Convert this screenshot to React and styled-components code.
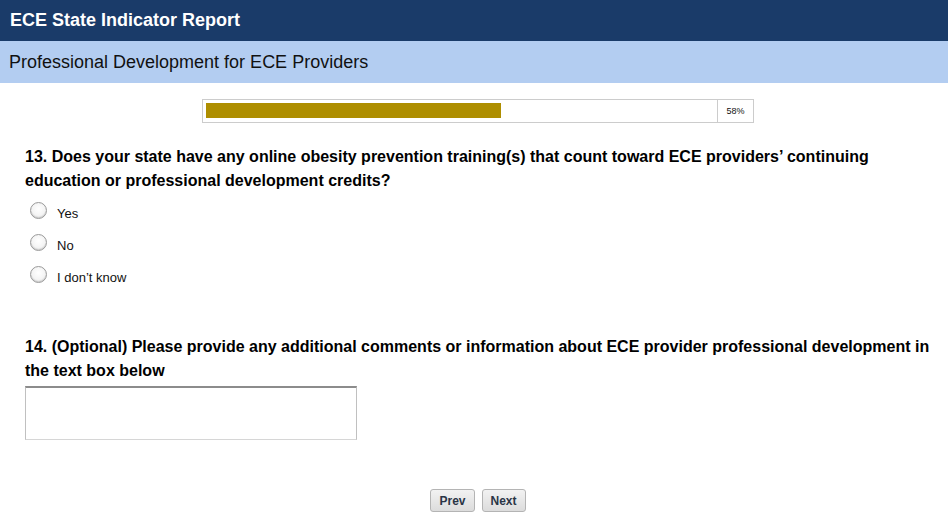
import styled, { createGlobalStyle } from "styled-components";

const GlobalStyle = createGlobalStyle`
  html, body {
    margin: 0;
    padding: 0;
    background: #ffffff;
    font-family: "Liberation Sans", Arial, sans-serif;
    color: #000000;
  }
`;

const TopBar = styled.header`
  height: 41px;
  background: #1a3b69;
  color: #ffffff;
  display: flex;
  align-items: center;
  padding: 0 10px;
  font-size: 18px;
  font-weight: 700;
`;

const SectionBar = styled.div`
  height: 42px;
  background: #b3cdf1;
  display: flex;
  align-items: center;
  padding: 0 9px;
  font-size: 18px;
  color: #111111;
`;

const Content = styled.main`
  padding: 16px 10px 0 25px;
`;

const Progress = styled.div`
  margin-left: 177px;
  width: 552px;
  height: 24px;
  box-sizing: border-box;
  border: 1px solid #cccccc;
  display: flex;
`;

const Track = styled.div`
  flex: 1;
  padding: 3px;
`;

const Fill = styled.div`
  height: 15px;
  background: #ae8e00;
`;

const Percent = styled.div`
  width: 35px;
  border-left: 1px solid #cccccc;
  display: flex;
  align-items: center;
  justify-content: center;
  font-size: 9px;
  color: #111111;
`;

const Question = styled.h2`
  margin: ${(p) => p.$top}px 0 0 0;
  font-size: 16px;
  line-height: 24px;
  font-weight: 700;
  color: #000000;
`;

const Options = styled.div`
  margin-top: 3px;
  display: flex;
  flex-direction: column;
`;

const Option = styled.label`
  height: 32px;
  display: flex;
  align-items: center;
  gap: 10px;
  padding-left: 5px;
  font-size: 13px;
  color: #111111;
  cursor: pointer;
`;

const Radio = styled.span`
  width: 17px;
  height: 17px;
  box-sizing: border-box;
  border-radius: 50%;
  border: 1px solid #9a9a9a;
  background: radial-gradient(circle at 50% 40%, #ffffff 0%, #f4f4f4 55%, #d8d8d8 100%);
  box-shadow: inset 0 -1px 1px rgba(0, 0, 0, 0.12);
  margin-top: -4px;
`;

const OptionText = styled.span`
  padding-top: 2px;
`;

const Comments = styled.textarea`
  display: block;
  margin-top: 3px;
  width: 332px;
  height: 54px;
  box-sizing: border-box;
  border-style: solid;
  border-width: 2px 1px 1px 1px;
  border-color: #8c8c8c #c0c0c0 #d6d6d6 #c0c0c0;
  resize: none;
  font-family: "Liberation Sans", Arial, sans-serif;
  font-size: 13px;
`;

const Nav = styled.div`
  display: flex;
  justify-content: center;
  gap: 7px;
  margin-top: 49px;
  padding-right: 7px;
`;

const NavButton = styled.button`
  height: 23px;
  padding: 0 8px;
  border: 1px solid #b4b4b4;
  border-radius: 3px;
  background: linear-gradient(#f2f2f2, #dcdcdc);
  font-family: "Liberation Sans", Arial, sans-serif;
  font-size: 12px;
  font-weight: 700;
  color: #2a3546;
  cursor: pointer;
`;

const choices = ["Yes", "No", "I don\u2019t know"];

export default function App() {
  const pct = 58;
  return (
    <>
      <GlobalStyle />
      <TopBar>ECE State Indicator Report</TopBar>
      <SectionBar>Professional Development for ECE Providers</SectionBar>
      <Content>
        <Progress>
          <Track>
            <Fill style={{ width: "295px" }} />
          </Track>
          <Percent>{pct}%</Percent>
        </Progress>

        <Question $top={22}>
          13. Does your state have any online obesity prevention training(s) that count toward ECE providers’ continuing
          education or professional development credits?
        </Question>
        <Options>
          {choices.map((c) => (
            <Option key={c}>
              <Radio />
              <OptionText>{c}</OptionText>
            </Option>
          ))}
        </Options>

        <Question $top={43}>
          14. (Optional) Please provide any additional comments or information about ECE provider professional development in
          the text box below
        </Question>
        <Comments />

        <Nav>
          <NavButton>Prev</NavButton>
          <NavButton>Next</NavButton>
        </Nav>
      </Content>
    </>
  );
}
